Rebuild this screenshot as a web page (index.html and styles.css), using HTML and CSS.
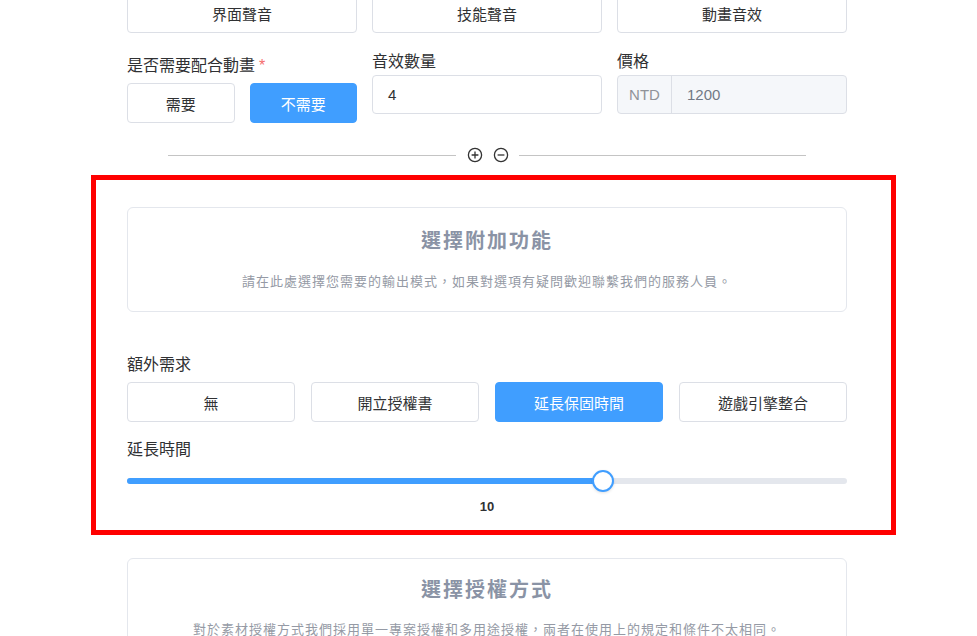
FILE: index.html
```html
<!DOCTYPE html>
<html>
  <head>
    <meta charset="utf-8">
    <meta name="viewport" content="width=device-width, initial-scale=1">
    <title>音效訂購</title>
    <link rel="stylesheet" href="styles.css">
  </head>
  <body>
    <div class="page">
      <!-- 音效類型 -->
      <div class="grid-3">
        <button class="opt">界面聲音</button>
        <button class="opt">技能聲音</button>
        <button class="opt">動畫音效</button>
      </div>

      <!-- 動畫 / 數量 / 價格 -->
      <div class="grid-3 row-spec">
        <div class="field field-anim">
          <label class="label">是否需要配合動畫<span class="req">*</span></label>
          <div class="pair">
            <button class="opt">需要</button>
            <button class="opt active">不需要</button>
          </div>
        </div>
        <div class="field">
          <label class="label">音效數量</label>
          <div class="input">4</div>
        </div>
        <div class="field">
          <label class="label">價格</label>
          <div class="input-group">
            <span class="addon">NTD</span>
            <span class="input disabled">1200</span>
          </div>
        </div>
      </div>

      <!-- 增減 -->
      <div class="divider">
        <span class="line"></span>
        <svg class="icon" viewBox="0 0 16 16" width="16" height="16">
          <circle cx="8" cy="8" r="6.6" />
          <path d="M8 4.6v6.8M4.6 8h6.8" />
        </svg>
        <svg class="icon" viewBox="0 0 16 16" width="16" height="16">
          <circle cx="8" cy="8" r="6.6" />
          <path d="M4.6 8h6.8" />
        </svg>
        <span class="line"></span>
      </div>

      <!-- 附加功能 -->
      <section class="marked">
        <div class="card">
          <h2 class="card-title">選擇附加功能</h2>
          <p class="card-desc">請在此處選擇您需要的輸出模式，如果對選項有疑問歡迎聯繫我們的服務人員。</p>
        </div>

        <div class="field extra">
          <label class="label">額外需求</label>
          <div class="grid-4">
            <button class="opt">無</button>
            <button class="opt">開立授權書</button>
            <button class="opt active">延長保固時間</button>
            <button class="opt">遊戲引擎整合</button>
          </div>
        </div>

        <div class="field extend">
          <label class="label">延長時間</label>
          <div class="slider" style="--ratio: 0.6667">
            <div class="track"><div class="fill"></div></div>
            <span class="thumb"></span>
          </div>
          <div class="slider-value">10</div>
        </div>
      </section>

      <!-- 授權方式 -->
      <div class="card card-license">
        <h2 class="card-title">選擇授權方式</h2>
        <p class="card-desc">對於素材授權方式我們採用單一專案授權和多用途授權，兩者在使用上的規定和條件不太相同。</p>
      </div>
    </div>
  </body>
</html>
```

FILE: styles.css
```css
* {
  box-sizing: border-box;
}
body {
  margin: 0;
  padding-right: 3px;
  background: #fff;
  color: #303133;
  font-family: "Liberation Sans", "Noto Sans CJK TC", sans-serif;
  overflow: hidden;
}
.page {
  width: 720px;
  margin: -7px auto 0;
}
/* -------- 網格 ------------- */
.grid-3 {
  display: grid;
  grid-template-columns: repeat(3, 1fr);
  column-gap: 15px;
}
.grid-4 {
  display: grid;
  grid-template-columns: repeat(4, 1fr);
  column-gap: 16px;
}
.pair {
  display: grid;
  grid-template-columns: 1fr 1fr;
  column-gap: 15px;
}
/* -------- 按鈕 ------------- */
.opt {
  height: 40px;
  padding: 0 10px;
  border: 1px solid #dcdfe6;
  border-radius: 4px;
  background: #fff;
  color: #303133;
  font: inherit;
  font-size: 15px;
  cursor: pointer;
}
.opt.active {
  background: #409eff;
  border-color: #409eff;
  color: #fff;
}
/* -------- 表單欄位 ------------- */
.row-spec {
  margin-top: 18px;
}
.field {
  display: flex;
  flex-direction: column;
}
.label {
  font-size: 16px;
  line-height: 22px;
  color: #303133;
}
.req {
  color: #f56c6c;
  margin-left: 4px;
}
.field-anim .label {
  padding-top: 4px;
}
.field-anim .pair {
  margin-top: 6px;
}
.input {
  display: flex;
  align-items: center;
  height: 39px;
  margin-top: 2px;
  padding: 0 15px;
  border: 1px solid #dcdfe6;
  border-radius: 4px;
  font-size: 15px;
  color: #303133;
}
.input-group {
  display: flex;
  height: 39px;
  margin-top: 2px;
  border: 1px solid #dcdfe6;
  border-radius: 4px;
  background: #f5f7fa;
  overflow: hidden;
}
.addon {
  display: flex;
  align-items: center;
  justify-content: center;
  width: 54px;
  border-right: 1px solid #dcdfe6;
  color: #909399;
  font-size: 15px;
}
.input-group .input {
  flex: 1;
  height: auto;
  margin: 0;
  border: 0;
  border-radius: 0;
}
.input.disabled {
  color: #717985;
}
/* -------- 分隔線 ------------- */
.divider {
  display: flex;
  align-items: center;
  height: 20px;
  margin-top: 22px;
  padding: 0 41px;
}
.divider .line {
  flex: 1;
  height: 1px;
  background: #c4c4c4;
}
.divider .line:first-child {
  margin-right: 11px;
}
.divider .line:last-child {
  margin-left: 10px;
}
.icon {
  fill: none;
  stroke: #333;
  stroke-width: 1.3;
}
.icon + .icon {
  margin-left: 10px;
}
/* -------- 標示框 ------------- */
.marked {
  margin: 10px -49px 0 -36px;
  padding: 27px 44px 14px 31px;
  border: 5px solid #ff0000;
}
/* -------- 卡片 ------------- */
.card {
  padding: 19px 20px;
  border: 1px solid #e4e7ed;
  border-radius: 6px;
  text-align: center;
}
.card-title {
  margin: 0;
  font-size: 20px;
  line-height: 28px;
  font-weight: 700;
  letter-spacing: 2px;
  color: #8a93a5;
}
.card-desc {
  margin: 17px 0 0;
  font-size: 13px;
  line-height: 20px;
  letter-spacing: 1px;
  color: #959aa5;
}
.card-license {
  margin-top: 23px;
  padding-top: 17px;
}
.card-license .card-desc {
  margin-top: 16px;
}
/* -------- 額外需求 ------------- */
.extra {
  margin-top: 42px;
}
.extra .grid-4 {
  margin-top: 6px;
}
/* -------- 滑桿 ------------- */
.extend {
  margin-top: 17px;
}
.slider {
  position: relative;
  height: 22px;
  margin-top: 9px;
  display: flex;
  align-items: center;
}
.track {
  width: 100%;
  height: 6px;
  border-radius: 3px;
  background: #e4e7ed;
  overflow: hidden;
}
.fill {
  height: 100%;
  width: calc(11px + (100% - 22px) * var(--ratio));
  background: #409eff;
}
.thumb {
  position: absolute;
  top: 0;
  left: calc((100% - 22px) * var(--ratio));
  width: 22px;
  height: 22px;
  border: 2px solid #409eff;
  border-radius: 50%;
  background: #fff;
  box-shadow: 0 1px 3px rgba(0, 0, 0, .12);
}
.slider-value {
  margin-top: 6px;
  line-height: 18px;
  font-size: 13px;
  font-weight: 700;
  text-align: center;
  color: #303133;
}
```
